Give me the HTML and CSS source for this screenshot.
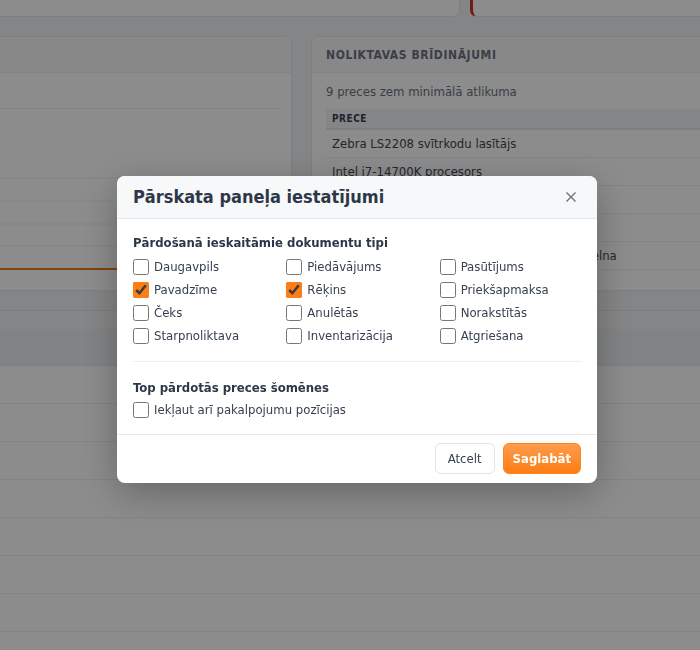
FILE: index.html
```html
<!DOCTYPE html>
<html lang="lv">
<head>
<meta charset="utf-8">
<title>Pārskats</title>
<link rel="stylesheet" href="styles.css">
</head>
<body>
<div class="page">
  <div class="kpis">
    <div class="card kpi"></div>
    <div class="card kpi kpi-alert"></div>
  </div>

  <div class="row">
    <div class="card">
      <div class="card-header"></div>
      <div class="summary"></div>
      <svg class="chart" viewBox="0 0 312 183" preserveAspectRatio="none">
        <line class="grid" x1="0" y1="69" x2="300" y2="69"/>
        <line class="grid" x1="0" y1="92" x2="300" y2="92"/>
        <line class="grid" x1="0" y1="115" x2="300" y2="115"/>
        <line class="grid" x1="0" y1="137" x2="300" y2="137"/>
        <line class="series" x1="0" y1="160" x2="312" y2="160"/>
      </svg>
    </div>

    <div class="card">
      <div class="card-header"><h2 class="card-title">Noliktavas brīdinājumi</h2></div>
      <div class="card-body">
        <p class="muted">9 preces zem minimālā atlikuma</p>
        <table class="stock">
          <thead><tr><th>Prece</th></tr></thead>
          <tbody>
            <tr><td>Zebra LS2208 svītrkodu lasītājs</td></tr>
            <tr><td>Intel i7-14700K procesors</td></tr>
            <tr><td>Kingston 32GB DDR5 atmiņas modulis</td></tr>
            <tr><td>HP 59A lāzerprintera tonera kasetne</td></tr>
            <tr><td>Logitech MX Keys Mini bezvadu tastatūra, melna</td></tr>
          </tbody>
        </table>
      </div>
    </div>
  </div>

  <div class="card wide">
    <div class="wide-top"></div>
    <table class="list">
      <thead><tr><th></th></tr></thead>
      <tbody>
        <tr><td></td></tr><tr><td></td></tr><tr><td></td></tr><tr><td></td></tr>
        <tr><td></td></tr><tr><td></td></tr><tr><td></td></tr><tr><td></td></tr>
      </tbody>
    </table>
  </div>
</div>

<div class="overlay">
  <div class="modal" role="dialog" aria-labelledby="dlg-title">
    <div class="modal-header">
      <h3 class="modal-title" id="dlg-title">Pārskata paneļa iestatījumi</h3>
      <button class="close" aria-label="Aizvērt">
        <svg width="12" height="12" viewBox="0 0 12 12"><path d="M1.5 1.5l9 9M10.5 1.5l-9 9"/></svg>
      </button>
    </div>
    <div class="modal-body">
      <h4 class="section-title">Pārdošanā ieskaitāmie dokumentu tipi</h4>
      <div class="options">
        <label class="opt"><input type="checkbox">Daugavpils</label>
        <label class="opt"><input type="checkbox">Piedāvājums</label>
        <label class="opt"><input type="checkbox">Pasūtījums</label>
        <label class="opt"><input type="checkbox" checked>Pavadzīme</label>
        <label class="opt"><input type="checkbox" checked>Rēķins</label>
        <label class="opt"><input type="checkbox">Priekšapmaksa</label>
        <label class="opt"><input type="checkbox">Čeks</label>
        <label class="opt"><input type="checkbox">Anulētās</label>
        <label class="opt"><input type="checkbox">Norakstītās</label>
        <label class="opt"><input type="checkbox">Starpnoliktava</label>
        <label class="opt"><input type="checkbox">Inventarizācija</label>
        <label class="opt"><input type="checkbox">Atgriešana</label>
      </div>
      <hr class="divider">
      <h4 class="section-title section-title-sm">Top pārdotās preces šomēnes</h4>
      <label class="opt"><input type="checkbox">Iekļaut arī pakalpojumu pozīcijas</label>
    </div>
    <div class="modal-footer">
      <button class="btn btn-light">Atcelt</button>
      <button class="btn btn-primary">Saglabāt</button>
    </div>
  </div>
</div>
</body>
</html>
```

FILE: styles.css
```css
* { box-sizing: border-box; }

html, body {
  margin: 0;
  height: 100%;
  overflow: hidden;
}

body {
  background: #f1f2f4;
  font-family: "DejaVu Sans Condensed", "DejaVu Sans", sans-serif;
  font-stretch: condensed;
  font-size: 13px;
  color: #4b5563;
}

/* dashboard behind the dialog (scrolled slightly) */
.page {
  margin: -40px 0 0 -20px;
  width: 800px;
  display: flex;
  flex-direction: column;
  gap: 19px;
}

.card {
  background: #fff;
  border: 1px solid #e3e6ea;
  border-radius: 7px;
  overflow: hidden;
}

.kpis {
  display: grid;
  grid-template-columns: 480px 1fr;
  gap: 10px;
}

.kpi { height: 57px; }

.kpi-alert { border-left: 3px solid #d32f2f; }

.row {
  display: grid;
  grid-template-columns: 312px 1fr;
  gap: 19px;
  height: 255px;
}

.card-header {
  height: 36px;
  padding: 0 14px;
  display: flex;
  align-items: center;
  background: #f7f8f9;
  border-bottom: 1px solid #eceef1;
}

.card-title {
  margin: 0;
  font-size: 12px;
  font-weight: bold;
  text-transform: uppercase;
  letter-spacing: 0.6px;
  color: #6b7380;
}

.summary {
  height: 36px;
  margin: 0 12px 0 0;
  border-bottom: 1px solid #eceef1;
}

.chart {
  display: block;
  width: 312px;
  height: 183px;
}

.chart .grid { stroke: #eef0f3; stroke-width: 1; }
.chart .series { stroke: #f07a12; stroke-width: 2; }

.card-body { padding: 9px 14px 14px; }

.muted {
  margin: 0 0 7px;
  line-height: 20px;
  color: #6b7280;
}

.stock {
  width: 100%;
  border-collapse: collapse;
}

.stock th {
  background: #f3f4f6;
  height: 20px;
  padding: 0 6px;
  text-align: left;
  font-size: 10px;
  font-weight: bold;
  letter-spacing: 0.5px;
  text-transform: uppercase;
  color: #374151;
  border-bottom: 2px solid #e2e5e9;
}

.stock td {
  height: 28px;
  padding: 0 6px;
  color: #3f4754;
  border-bottom: 1px solid #eceef1;
  white-space: nowrap;
}

.wide-top {
  height: 18px;
  background: #f3f4f6;
}

.list {
  width: 100%;
  border-collapse: collapse;
}

.list th {
  height: 36px;
  background: #eceff3;
  border-bottom: 1px solid #e4e7eb;
}

.list td {
  height: 38px;
  border-bottom: 1px solid #eceef1;
}

/* dialog */
.overlay {
  position: fixed;
  inset: 0;
  background: rgba(0, 0, 0, 0.45);
  display: flex;
  align-items: center;
  justify-content: center;
  padding: 8px 0 0 14px;
}

.modal {
  width: 480px;
  background: #fff;
  border-radius: 8px;
  overflow: hidden;
  box-shadow: 0 10px 38px rgba(0, 0, 0, 0.28);
}

.modal-header {
  height: 43px;
  padding: 0 16px;
  display: flex;
  align-items: center;
  justify-content: space-between;
  background: #f7f8fa;
  border-bottom: 1px solid #e4e7eb;
}

.modal-title {
  margin: 0;
  font-size: 18px;
  font-weight: bold;
  color: #2d3748;
}

.close {
  border: 0;
  background: none;
  padding: 0;
  width: 12px;
  height: 12px;
  margin-right: 4px;
  display: flex;
  cursor: pointer;
}

.close path {
  stroke: #6b7280;
  stroke-width: 1.4;
  fill: none;
}

.modal-body { padding: 15px 16px 15px; }

.section-title {
  margin: 0 0 6px;
  font-size: 13px;
  line-height: 18px;
  font-weight: bold;
  color: #2d3748;
}

.section-title-sm { margin-bottom: 4px; }

.options {
  display: grid;
  grid-template-columns: repeat(3, 1fr);
  column-gap: 12px;
  row-gap: 5px;
}

.opt {
  display: flex;
  align-items: center;
  height: 18px;
  color: #374151;
  font-size: 13px;
}

.opt input {
  width: 16px;
  height: 16px;
  margin: 0 5px 0 0;
  accent-color: #fd7e14;
}

.divider {
  border: 0;
  border-top: 1px solid #eceef1;
  margin: 16px 0 17px;
}

.modal-footer {
  display: flex;
  justify-content: flex-end;
  gap: 8px;
  padding: 8px 16px 9px;
  border-top: 1px solid #e4e7eb;
}

.btn {
  height: 31px;
  border-radius: 6px;
  padding: 0 12px;
  font-family: inherit;
  font-stretch: condensed;
  font-size: 13px;
  cursor: pointer;
}

.btn-light {
  background: #fff;
  border: 1px solid #dfe2e6;
  color: #374151;
}

.btn-primary {
  padding: 0 9px;
  background: linear-gradient(180deg, #ff9b4d, #fd7e14);
  border: 1px solid #fb8522;
  color: #fff;
  font-weight: bold;
}
```
